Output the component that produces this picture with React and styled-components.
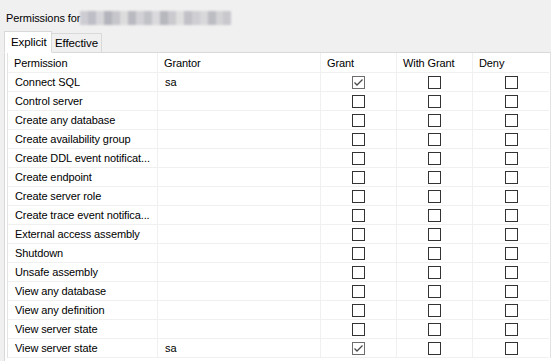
import styled, { createGlobalStyle } from 'styled-components';

const rows = [
  { name: 'Connect SQL', grantor: 'sa', grant: true },
  { name: 'Control server' },
  { name: 'Create any database' },
  { name: 'Create availability group' },
  { name: 'Create DDL event notificat...' },
  { name: 'Create endpoint' },
  { name: 'Create server role' },
  { name: 'Create trace event notifica...' },
  { name: 'External access assembly' },
  { name: 'Shutdown' },
  { name: 'Unsafe assembly' },
  { name: 'View any database' },
  { name: 'View any definition' },
  { name: 'View server state' },
  { name: 'View server state', grantor: 'sa', grant: true },
];

const blurShades = [
  '#c9c9cf', '#b9b9c2', '#d4d4d8', '#aeaeb8', '#c2c2c8', '#dadada', '#b4b4bc',
  '#cfcfd4', '#bdbdc4', '#d8d8dc', '#b1b1b9', '#c6c6cc', '#dedede', '#bcbcc3',
  '#cbcbd0', '#d6d6d9', '#b7b7bf', '#d0d0d4', '#c4c4ca',
];

const Check = ({ checked }) => (
  <Box $checked={checked}>
    {checked && (
      <svg width="11" height="11" viewBox="0 0 11 11">
        <path d="M1.5 5.5 L4 8 L9.5 2.5" fill="none" stroke="#4a4a4a" strokeWidth="1.3" />
      </svg>
    )}
  </Box>
);

const App = () => {
  return (
    <>
      <GlobalStyle />
      <Page>
        <TitleRow>
          <span>Permissions for</span>
          <Blurred>
            {blurShades.map((c, i) => (
              <BlurCell key={i} style={{ background: c }} />
            ))}
          </Blurred>
        </TitleRow>
        <Tabs>
          <Tab $active>Explicit</Tab>
          <Tab>Effective</Tab>
        </Tabs>
        <Panel>
          <Grid>
            <HeadCell>Permission</HeadCell>
            <HeadCell>Grantor</HeadCell>
            <HeadCell>Grant</HeadCell>
            <HeadCell>With Grant</HeadCell>
            <HeadCell $last>Deny</HeadCell>
            {rows.map((r, i) => (
              <Row key={i}>
                <Cell>{r.name}</Cell>
                <Cell>{r.grantor || ''}</Cell>
                <BoxCell><Check checked={r.grant} /></BoxCell>
                <BoxCell><Check /></BoxCell>
                <BoxCell $last><Check /></BoxCell>
              </Row>
            ))}
          </Grid>
        </Panel>
      </Page>
    </>
  );
};

const GlobalStyle = createGlobalStyle`
  html, body {
    margin: 0;
    padding: 0;
    background: #f0f0f0;
    overflow: hidden;
  }
  body {
    font-family: "Liberation Sans", Arial, sans-serif;
    font-size: 11px;
    letter-spacing: -0.1px;
    color: #000;
  }
`;

const Page = styled.div`
  width: 551px;
  height: 361px;
  overflow: hidden;
`;

const TitleRow = styled.div`
  display: flex;
  align-items: center;
  height: 14px;
  padding: 11px 0 0 6px;
  gap: 0;
  line-height: 14px;
`;

const Blurred = styled.div`
  display: flex;
  width: 151px;
  height: 14px;
  filter: blur(1.2px);
  opacity: 0.9;
`;

const BlurCell = styled.div`
  flex: 1;
  height: 100%;
`;

const Tabs = styled.div`
  display: flex;
  align-items: flex-end;
  margin-top: 6px;
  padding-left: 4px;
  height: 21px;
  position: relative;
  z-index: 1;
`;

const Tab = styled.div`
  box-sizing: border-box;
  height: ${p => (p.$active ? '22px' : '19px')};
  padding: ${p => (p.$active ? '3px 0 0 6px' : '2px 0 0 3px')};
  width: ${p => (p.$active ? '48px' : '50px')};
  background: ${p => (p.$active ? '#fff' : '#f0f0f0')};
  border: 1px solid #d9d9d9;
  border-bottom: ${p => (p.$active ? '1px solid #fff' : '0')};
  margin-bottom: ${p => (p.$active ? '-1px' : '0')};
  ${p => !p.$active && 'border-left: 0;'}
  font-size: 11.5px;
  line-height: 15px;
`;

const Panel = styled.div`
  margin-left: 4px;
  width: 551px;
  height: 320px;
  box-sizing: border-box;
  border: 1px solid #d9d9d9;
  background: #fff;
  padding: 0 0 0 2px;
`;

const Grid = styled.div`
  display: grid;
  grid-template-columns: 150px 163px 76px 76px 76px;
  width: 542px;
  border-left: 1px solid #e3e3e3;
  border-right: 1px solid #e3e3e3;
  background: #fff;
`;

const Row = styled.div`
  display: contents;
`;

const HeadCell = styled.div`
  box-sizing: border-box;
  height: 20px;
  padding: 1px 0 0 6px;
  line-height: 18px;
  border-bottom: 1px solid #f0f0f0;
  border-right: ${p => (p.$last ? '0' : '1px solid #f0f0f0')};
  white-space: nowrap;
`;

const Cell = styled.div`
  box-sizing: border-box;
  height: 19px;
  padding: 0 0 0 7px;
  line-height: 18px;
  border-bottom: 1px solid #f0f0f0;
  border-right: 1px solid #f0f0f0;
  white-space: nowrap;
  overflow: hidden;
`;

const BoxCell = styled(Cell)`
  padding: 0;
  display: flex;
  align-items: center;
  justify-content: center;
  border-right: ${p => (p.$last ? '0' : '1px solid #f0f0f0')};
`;

const Box = styled.div`
  box-sizing: border-box;
  width: 13px;
  height: 13px;
  border: 1px solid ${p => (p.$checked ? '#6d6d6d' : '#333')};
  display: flex;
  align-items: center;
  justify-content: center;
  background: #fff;
`;

export default App;
